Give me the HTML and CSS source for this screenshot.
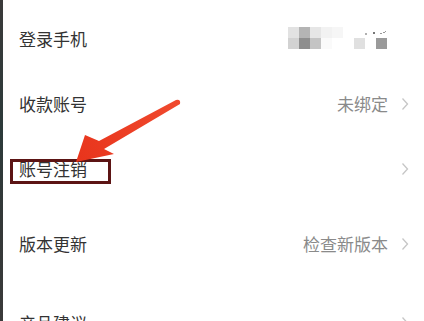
FILE: index.html
```html
<!DOCTYPE html>
<html lang="zh">
<head>
<meta charset="utf-8">
<link rel="stylesheet" href="styles.css">
</head>
<body>
<div class="screen">
  <div class="edge"></div>
  <div class="list">
    <div class="group first">
      <div class="row">
        <span class="label">登录手机</span>
        <div class="mosaic">
          <i class="c1"></i><i class="c2"></i><i class="c3"></i><i class="c4"></i><i class="c5"></i><i class="w"></i><i class="w"></i><i class="w dotcell"></i><i class="w slashcell"></i>
          <i class="d1"></i><i class="d2"></i><i class="d3"></i><i class="d4"></i><i class="w"></i><i class="w"></i><i class="d7"></i><i class="w"></i><i class="d9"></i>
        </div>
        <svg class="chev hidden" width="8" height="14" viewBox="0 0 8 14"><polyline points="1.5,1.5 6.5,7 1.5,12.5" fill="none" stroke="#c6c6c6" stroke-width="1.3"/></svg>
      </div>
      <div class="row">
        <span class="label">收款账号</span>
        <span class="value">未绑定</span>
        <svg class="chev" width="8" height="14" viewBox="0 0 8 14"><polyline points="1.5,1.5 6.5,7 1.5,12.5" fill="none" stroke="#c6c6c6" stroke-width="1.3"/></svg>
      </div>
      <div class="row">
        <span class="label">账号注销</span>
        <span class="value"></span>
        <svg class="chev" width="8" height="14" viewBox="0 0 8 14"><polyline points="1.5,1.5 6.5,7 1.5,12.5" fill="none" stroke="#c6c6c6" stroke-width="1.3"/></svg>
      </div>
    </div>
    <div class="group second">
      <div class="row">
        <span class="label">版本更新</span>
        <span class="value">检查新版本</span>
        <svg class="chev" width="8" height="14" viewBox="0 0 8 14"><polyline points="1.5,1.5 6.5,7 1.5,12.5" fill="none" stroke="#c6c6c6" stroke-width="1.3"/></svg>
      </div>
      <div class="row">
        <span class="label">产品建议</span>
        <span class="value"></span>
        <svg class="chev" width="8" height="14" viewBox="0 0 8 14"><polyline points="1.5,1.5 6.5,7 1.5,12.5" fill="none" stroke="#c6c6c6" stroke-width="1.3"/></svg>
      </div>
    </div>
  </div>
  <div class="highlight"></div>
  <svg class="arrow" width="424" height="321" viewBox="0 0 424 321">
    <defs>
      <linearGradient id="ag" x1="76" y1="160" x2="180" y2="102" gradientUnits="userSpaceOnUse">
        <stop offset="0" stop-color="#e8341c"/>
        <stop offset="1" stop-color="#f04a2e"/>
      </linearGradient>
    </defs>
    <path d="M76 162 L85 135 L99 141 L176 100 Q181 99 180 104 L104 149 L114 154 Z" fill="url(#ag)"/>
  </svg>
</div>
</body>
</html>
```
FILE: styles.css
```css
html, body {
  margin: 0;
  padding: 0;
  background: #ffffff;
}
.screen {
  position: relative;
  width: 424px;
  height: 321px;
  overflow: hidden;
  display: flex;
  font-family: "Noto Sans CJK SC", "Noto Sans", sans-serif;
}
.edge {
  width: 3px;
  flex: none;
  background: linear-gradient(#3a3a3a, #2c3a3a 40%, #343838 70%, #3a3a3a);
}
.list {
  flex: 1;
  padding-top: 6px;
}
.group.second {
  margin-top: 10px;
  display: flex;
  flex-direction: column;
  gap: 14px;
}
.row {
  height: 65px;
  display: flex;
  align-items: center;
  padding: 0 15px 0 16px;
}
.label {
  font-size: 17px;
  color: #333333;
  flex: 1;
}
.value {
  font-size: 17px;
  color: #8a8a8a;
  margin-right: 13px;
}
.chev {
  display: block;
  flex: none;
}
.chev.hidden {
  visibility: hidden;
}
.mosaic {
  display: grid;
  grid-template-columns: repeat(9, 11px);
  grid-template-rows: 11px 11px;
  margin-right: 14px;
  margin-top: -2px;
}
.mosaic i { display: block; }
.mosaic .w { background: #ffffff; }
.mosaic .c1 { background: #e2e2e2; }
.mosaic .c2 { background: #b4b4b4; }
.mosaic .c3 { background: #e6e6e6; }
.mosaic .c4 { background: #f2f2f2; }
.mosaic .c5 { background: #f6f6f6; }
.mosaic .d1 { background: #d2d2d2; }
.mosaic .d2 { background: #8e8e8e; }
.mosaic .d3 { background: #c4c4c4; }
.mosaic .d4 { background: #fafafa; }
.mosaic .d7 { background: #e0e0e0; }
.mosaic .d9 { background: #9a9a9a; }
.mosaic .dotcell {
  background: radial-gradient(circle at 1px 7px, #b0b0b0 0.8px, transparent 1.2px),
              radial-gradient(circle at 9px 6px, #777 1px, transparent 1.4px), #fff;
}
.mosaic .slashcell {
  background: linear-gradient(160deg, transparent 40%, #999 40%, #999 52%, transparent 52%) 4px 4px / 6px 4px no-repeat, #fff;
}
.highlight {
  position: absolute;
  left: 10px;
  top: 159px;
  width: 101px;
  height: 25px;
  box-sizing: border-box;
  border: 3px solid #5c1414;
}
.arrow {
  position: absolute;
  left: 0;
  top: 0;
}
```
